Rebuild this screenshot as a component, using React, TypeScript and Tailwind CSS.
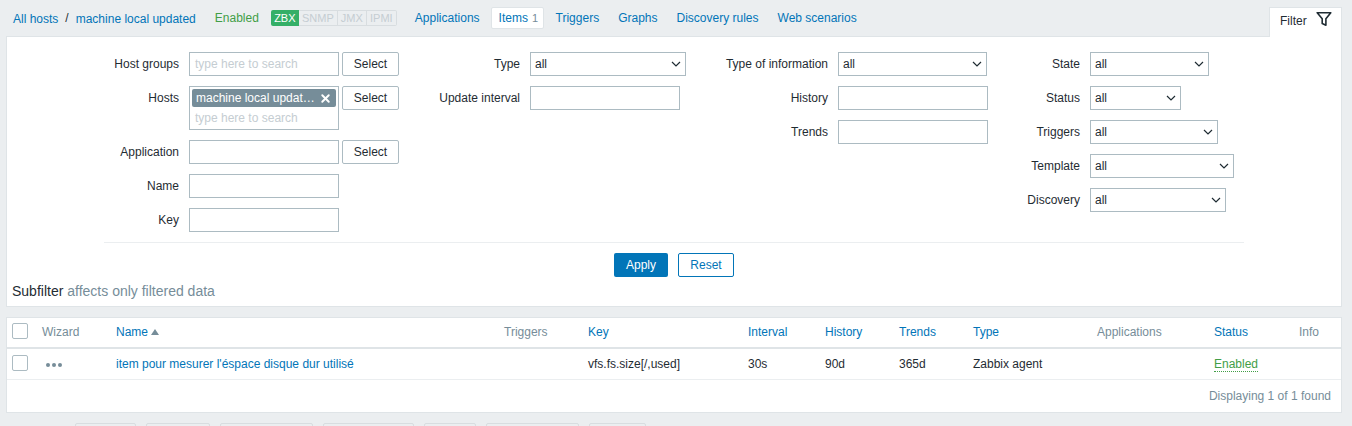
import { X } from 'lucide-react';

function Chevron() {
  return (
    <svg width="10" height="6" viewBox="0 0 10 6" fill="none" className="text-[#1f2c33]">
      <path d="M1 1l4 4 4-4" stroke="currentColor" strokeWidth="1.2" />
    </svg>
  );
}

function TextInput({ className = 'w-[150px]' }: { className?: string }) {
  return <div className={`h-6 shrink-0 border border-[#acbbc2] bg-white ${className}`} />;
}

function SearchInput() {
  return (
    <div className="flex h-6 w-[150px] shrink-0 items-center border border-[#acbbc2] bg-white pl-[5px] text-[#c5cdd2]">
      type here to search
    </div>
  );
}

function SelectButton() {
  return (
    <button type="button" className="ml-[3px] h-6 w-[57px] shrink-0 rounded-[2px] border border-[#acbbc2] bg-white text-[#1f2c33]">
      Select
    </button>
  );
}

function SelectBox({ className }: { className: string }) {
  return (
    <div className={`flex h-6 shrink-0 items-center justify-between border border-[#acbbc2] bg-white pl-[4px] pr-[4px] ${className}`}>
      <span>all</span>
      <Chevron />
    </div>
  );
}

function FormRow({ label, labelWidth, children }: { label: string; labelWidth: string; children: React.ReactNode }) {
  return (
    <div className="mb-[10px] flex items-start">
      <div className={`mr-[10px] h-6 shrink-0 text-right leading-6 ${labelWidth}`}>{label}</div>
      {children}
    </div>
  );
}

const gridCols = 'grid grid-cols-[35px_74px_388px_84px_160px_77px_74px_74px_124px_117px_85px_1fr] items-center';

function Checkbox() {
  return <div className="mb-[2px] ml-[5px] h-4 w-4 rounded-[2px] border border-[#acbbc2] bg-white" />;
}

const bottomButtons = ['w-[61px]', 'w-[64px]', 'w-[93px]', 'w-[91px]', 'w-[52px]', 'w-[93px]', 'w-[57px]'];

export default function App() {
  return (
    <div className="h-[426px] overflow-hidden bg-[#ebeef0] pl-[6px] pr-[10px] font-['Liberation_Sans',Arial,sans-serif] text-[12px] leading-[14px] text-[#1f2c33]">
      {/* Top nav */}
      <div className="flex h-9 items-start">
        <div className="flex h-9 items-center pt-[2px]">
          <a className="ml-[7px] text-[#0275b8]">All hosts</a>
          <span className="ml-[7px] -mt-[3px]">/</span>
          <a className="ml-[7px] text-[#0275b8]">machine local updated</a>
        </div>
        <div className="flex h-9 items-center">
          <span className="ml-[19px] text-[#429e47]">Enabled</span>
          <div className="ml-[12px] flex h-4 text-[11px] leading-4 text-[#c5cdd2]">
            <span className="w-[28px] rounded-l-[2px] bg-[#34af67] text-center text-white">ZBX</span>
            <span className="w-[39px] border-y border-r border-[#d8dde0] text-center leading-[14px]">SNMP</span>
            <span className="w-[29px] border-y border-r border-[#d8dde0] text-center leading-[14px]">JMX</span>
            <span className="w-[30px] rounded-r-[2px] border-y border-r border-[#d8dde0] text-center leading-[14px]">IPMI</span>
          </div>
          <a className="ml-[18px] text-[#0275b8]">Applications</a>
          <a className="ml-[11px] flex h-[22px] w-[53px] items-center rounded-[2px] border border-[#dfe4e7] bg-white pl-[7px] text-[#0275b8]">
            Items<span className="ml-[4px] text-[11px] text-[#768d99]">1</span>
          </a>
          <a className="ml-[12px] text-[#0275b8]">Triggers</a>
          <a className="ml-[19px] text-[#0275b8]">Graphs</a>
          <a className="ml-[19px] text-[#0275b8]">Discovery rules</a>
          <a className="ml-[19px] text-[#0275b8]">Web scenarios</a>
        </div>
        <div className="relative z-10 ml-auto mt-[7px] flex h-[30px] w-[73px] items-start border-x border-t border-[#dfe4e7] bg-white pl-[10px] pt-[5px]">
          <span className="mt-[1px]">Filter</span>
          <svg width="16" height="16" viewBox="0 0 16 16" fill="none" className="ml-[9px] -mt-[2px]">
            <path d="M1.2 1.7h13.6L9.9 7.8v6.4L6.2 12.6V7.8z" stroke="#1f2c33" strokeWidth="1.6" strokeLinejoin="round" />
          </svg>
        </div>
      </div>

      {/* Filter panel */}
      <div className="h-[271px] border border-[#dfe4e7] bg-white">
        <div className="flex h-[205px] pt-[15px]">
          <div className="w-[393px] shrink-0">
            <FormRow label="Host groups" labelWidth="w-[172px]">
              <SearchInput />
              <SelectButton />
            </FormRow>
            <FormRow label="Hosts" labelWidth="w-[172px]">
              <div className="h-11 w-[150px] shrink-0 border border-[#acbbc2] bg-white p-[2px]">
                <div className="flex h-[18px] items-center rounded-[2px] bg-[#768d99] pl-1 text-white">
                  <span className="w-[119px] truncate">machine local updated</span>
                  <X size={13} strokeWidth={3.5} className="ml-[4px] text-white" />
                </div>
                <div className="mt-[4px] pl-[3px] text-[#c5cdd2]">type here to search</div>
              </div>
              <SelectButton />
            </FormRow>
            <FormRow label="Application" labelWidth="w-[172px]">
              <TextInput />
              <SelectButton />
            </FormRow>
            <FormRow label="Name" labelWidth="w-[172px]">
              <TextInput />
            </FormRow>
            <FormRow label="Key" labelWidth="w-[172px]">
              <TextInput />
            </FormRow>
          </div>
          <div className="w-[290px] shrink-0">
            <FormRow label="Type" labelWidth="w-[120px]">
              <SelectBox className="w-[156px]" />
            </FormRow>
            <FormRow label="Update interval" labelWidth="w-[120px]">
              <TextInput />
            </FormRow>
          </div>
          <div className="w-[300px] shrink-0">
            <FormRow label="Type of information" labelWidth="w-[138px]">
              <SelectBox className="w-[149px]" />
            </FormRow>
            <FormRow label="History" labelWidth="w-[138px]">
              <TextInput />
            </FormRow>
            <FormRow label="Trends" labelWidth="w-[138px]">
              <TextInput />
            </FormRow>
          </div>
          <div className="flex-1">
            <FormRow label="State" labelWidth="w-[90px]">
              <SelectBox className="w-[119px]" />
            </FormRow>
            <FormRow label="Status" labelWidth="w-[90px]">
              <SelectBox className="w-[91px]" />
            </FormRow>
            <FormRow label="Triggers" labelWidth="w-[90px]">
              <SelectBox className="w-[128px]" />
            </FormRow>
            <FormRow label="Template" labelWidth="w-[90px]">
              <SelectBox className="w-[144px]" />
            </FormRow>
            <FormRow label="Discovery" labelWidth="w-[90px]">
              <SelectBox className="w-[136px]" />
            </FormRow>
          </div>
        </div>
        <div className="ml-[97px] h-px w-[1140px] bg-[#ebeef0]" />
        <div className="ml-[607px] mt-[10px] flex gap-[10px]">
          <button type="button" className="h-6 w-[54px] rounded-[2px] bg-[#0275b8] text-white">Apply</button>
          <button type="button" className="h-6 w-[56px] rounded-[2px] border border-[#0275b8] bg-white text-[#0275b8]">Reset</button>
        </div>
        <div className="ml-[5px] mt-[6px] text-[14px] leading-4">
          Subfilter <span className="text-[#768d99]">affects only filtered data</span>
        </div>
      </div>

      {/* Items table */}
      <div className="mt-[10px] h-[96px] border border-[#dfe4e7] bg-white">
        <div className={`${gridCols} h-[31px] border-b-2 border-[#dfe4e7] pb-[1px] text-[#768d99]`}>
          <Checkbox />
          <span>Wizard</span>
          <a className="flex items-center text-[#0275b8]">
            Name
            <svg width="8" height="6" viewBox="0 0 8 6" className="ml-[3px]">
              <path d="M4 0l4 6H0z" fill="#768d99" />
            </svg>
          </a>
          <span>Triggers</span>
          <a className="text-[#0275b8]">Key</a>
          <a className="text-[#0275b8]">Interval</a>
          <a className="text-[#0275b8]">History</a>
          <a className="text-[#0275b8]">Trends</a>
          <a className="text-[#0275b8]">Type</a>
          <span>Applications</span>
          <a className="text-[#0275b8]">Status</a>
          <span>Info</span>
        </div>
        <div className={`${gridCols} h-[31px] border-b border-[#ebeef0]`}>
          <Checkbox />
          <div className="ml-[4px] mt-[2px] flex gap-[2px]">
            <span className="h-1 w-1 rounded-full bg-[#768d99]" />
            <span className="h-1 w-1 rounded-full bg-[#768d99]" />
            <span className="h-1 w-1 rounded-full bg-[#768d99]" />
          </div>
          <a className="text-[#0275b8]">item pour mesurer l'éspace disque dur utilisé</a>
          <span />
          <span>vfs.fs.size[/,used]</span>
          <span>30s</span>
          <span>90d</span>
          <span>365d</span>
          <span>Zabbix agent</span>
          <span />
          <span className="w-fit border-b border-dotted border-[#429e47] text-[#429e47]">Enabled</span>
          <span />
        </div>
        <div className="flex h-[32px] items-center justify-end pr-[10px] text-[#768d99]">Displaying 1 of 1 found</div>
      </div>

      {/* Action buttons, cut off by the bottom of the window */}
      <div className="ml-[69px] mt-[10px] flex gap-[10px]">
        {bottomButtons.map((w, i) => (
          <div key={i} className={`h-6 rounded-[2px] border border-[#d8dde0] bg-[#ebeef0] ${w}`} />
        ))}
      </div>
    </div>
  );
}
